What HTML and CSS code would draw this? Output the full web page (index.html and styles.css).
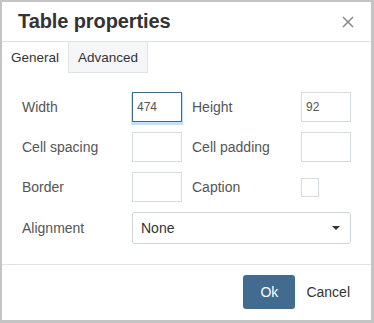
FILE: index.html
```html
<!DOCTYPE html>
<html lang="en">
<head>
    <meta charset="UTF-8">
    <meta name="viewport" content="width=device-width, initial-scale=1.0">
    <title>Table properties</title>
    <link rel="stylesheet" href="styles.css">
</head>
<body>
    <div class="dialog">
        <div class="dialog-head">
            <h1>Table properties</h1>
            <button class="close" aria-label="Close">
                <svg width="12" height="12" viewBox="0 0 12 12">
                    <path d="M1 1L11 11M11 1L1 11" stroke="#8c8c8c" stroke-width="1.6" fill="none"/>
                </svg>
            </button>
        </div>

        <div class="tabs">
            <div class="tab active">General</div>
            <div class="tab">Advanced</div>
        </div>

        <form class="props">
            <label for="width">Width</label>
            <input type="text" id="width" class="field focus" value="474">
            <label for="height" class="right-label">Height</label>
            <input type="text" id="height" class="field" value="92">

            <label for="cellspacing">Cell spacing</label>
            <input type="text" id="cellspacing" class="field">
            <label for="cellpadding" class="right-label">Cell padding</label>
            <input type="text" id="cellpadding" class="field">

            <label for="border">Border</label>
            <input type="text" id="border" class="field">
            <label for="caption" class="right-label">Caption</label>
            <span class="check-wrap"><span class="checkbox" id="caption"></span></span>

            <label for="align">Alignment</label>
            <div class="select" id="align">
                <span>None</span>
                <span class="caret"></span>
            </div>
        </form>

        <div class="dialog-foot">
            <button class="btn-ok">Ok</button>
            <button class="btn-cancel">Cancel</button>
        </div>
    </div>
</body>
</html>
```

FILE: styles.css
```css
body {
    margin: 0;
    background: #c4c4c4;
    font-family: 'Liberation Sans', Arial, sans-serif;
    color: #333;
}

.dialog {
    width: 369px;
    height: 318px;
    margin: 2px 0 0 2px;
    background: #fff;
    display: flex;
    flex-direction: column;
}

.dialog-head {
    height: 39px;
    border-bottom: 1px solid #dfe3e7;
    display: flex;
    align-items: center;
    justify-content: space-between;
    padding: 0 17px 0 16px;
}

.dialog-head h1 {
    margin: 0;
    font-size: 20px;
    font-weight: bold;
    color: #333;
    letter-spacing: -0.1px;
}

.close {
    border: none;
    background: none;
    padding: 0;
    width: 12px;
    height: 12px;
    display: flex;
}

.tabs {
    display: flex;
    height: 31px;
}

.tab {
    font-size: 13.5px;
    color: #333;
    padding: 0 9px;
    line-height: 32px;
    border-right: 1px solid #dfe3e7;
}

.tab.active {
    background: #fff;
}

.tab:not(.active) {
    background: #f5f6f8;
    border-bottom: 1px solid #dfe3e7;
    line-height: 31px;
}

.props {
    display: grid;
    grid-template-columns: 110px 50px 119px 50px;
    grid-template-rows: 30px 30px 30px 32px;
    row-gap: 10px;
    padding: 19px 20px 20px 20px;
    border-bottom: 1px solid #dfe3e7;
}

.props label {
    font-size: 14px;
    color: #555;
    align-self: center;
}

.props .right-label {
    padding-left: 10px;
}

.field {
    box-sizing: border-box;
    width: 50px;
    height: 30px;
    margin: 0;
    border: 1px solid #d4dae0;
    padding: 0 4px;
    font-family: 'Liberation Sans', Arial, sans-serif;
    font-size: 12px;
    color: #555;
    outline: none;
}

.field.focus {
    border-color: #3d6a92;
    box-shadow: 0 2px 0 1px #c4e0fb;
}

.check-wrap {
    display: flex;
    align-items: center;
}

.checkbox {
    display: block;
    box-sizing: border-box;
    width: 18px;
    height: 19px;
    border: 1px solid #d4dae0;
}

.select {
    grid-column: 2 / 5;
    box-sizing: border-box;
    height: 32px;
    border: 1px solid #d0d6dc;
    border-radius: 3px;
    display: flex;
    align-items: center;
    justify-content: space-between;
    padding: 0 10px 0 8px;
    font-size: 14px;
    color: #333;
}

.caret {
    width: 0;
    height: 0;
    border-left: 4px solid transparent;
    border-right: 4px solid transparent;
    border-top: 4px solid #333;
}

.dialog-foot {
    flex: 1;
    display: flex;
    justify-content: flex-end;
    align-items: flex-start;
    padding: 10px 15px 0 0;
    gap: 5px;
}

.btn-ok {
    width: 52px;
    height: 34px;
    border: none;
    border-radius: 3px;
    background: #416b8f;
    color: #fff;
    font-family: 'Liberation Sans', Arial, sans-serif;
    font-size: 14px;
}

.btn-cancel {
    height: 34px;
    border: none;
    background: none;
    padding: 0 6px;
    color: #333;
    font-family: 'Liberation Sans', Arial, sans-serif;
    font-size: 14px;
}
```
